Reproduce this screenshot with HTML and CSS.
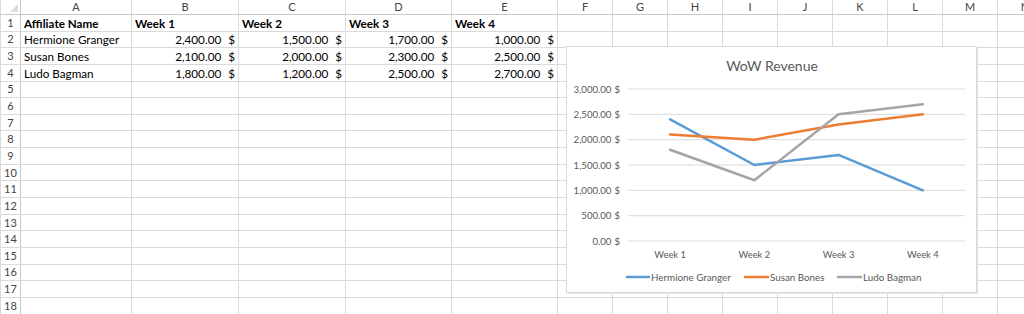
FILE: index.html
```html
<!DOCTYPE html>
<html lang="en">
<head>
    <meta charset="UTF-8">
    <title>WoW Revenue</title>
    <link rel="stylesheet" href="styles.css">
</head>
<body>
    <div class="workbook">
        <table class="sheet">
            <colgroup>
                <col class="col-row">
                <col class="col-a">
                <col class="col-b">
                <col class="col-c">
                <col class="col-d">
                <col class="col-e">
                <col class="col-s"><col class="col-s"><col class="col-s"><col class="col-s"><col class="col-s">
                <col class="col-s"><col class="col-s"><col class="col-s"><col class="col-s">
            </colgroup>
            <tr class="letters">
                <th class="corner"><span class="tri"></span></th>
                <th>A</th><th>B</th><th>C</th><th>D</th><th>E</th><th>F</th><th>G</th>
                <th>H</th><th>I</th><th>J</th><th>K</th><th>L</th><th>M</th><th>N</th>
            </tr>
            <tr>
                <th>1</th>
                <td class="bold">Affiliate Name</td>
                <td class="bold">Week 1</td>
                <td class="bold">Week 2</td>
                <td class="bold">Week 3</td>
                <td class="bold">Week 4</td>
                <td></td><td></td><td></td><td></td><td></td><td></td><td></td><td></td><td></td>
            </tr>
            <tr>
                <th>2</th>
                <td>Hermione Granger</td>
                <td class="num">2,400.00<span class="cur">$</span></td>
                <td class="num">1,500.00<span class="cur">$</span></td>
                <td class="num">1,700.00<span class="cur">$</span></td>
                <td class="num">1,000.00<span class="cur">$</span></td>
                <td></td><td></td><td></td><td></td><td></td><td></td><td></td><td></td><td></td>
            </tr>
            <tr>
                <th>3</th>
                <td>Susan Bones</td>
                <td class="num">2,100.00<span class="cur">$</span></td>
                <td class="num">2,000.00<span class="cur">$</span></td>
                <td class="num">2,300.00<span class="cur">$</span></td>
                <td class="num">2,500.00<span class="cur">$</span></td>
                <td></td><td></td><td></td><td></td><td></td><td></td><td></td><td></td><td></td>
            </tr>
            <tr>
                <th>4</th>
                <td>Ludo Bagman</td>
                <td class="num">1,800.00<span class="cur">$</span></td>
                <td class="num">1,200.00<span class="cur">$</span></td>
                <td class="num">2,500.00<span class="cur">$</span></td>
                <td class="num">2,700.00<span class="cur">$</span></td>
                <td></td><td></td><td></td><td></td><td></td><td></td><td></td><td></td><td></td>
            </tr>
            <tr><th>5</th><td></td><td></td><td></td><td></td><td></td><td></td><td></td><td></td><td></td><td></td><td></td><td></td><td></td><td></td></tr>
            <tr><th>6</th><td></td><td></td><td></td><td></td><td></td><td></td><td></td><td></td><td></td><td></td><td></td><td></td><td></td><td></td></tr>
            <tr><th>7</th><td></td><td></td><td></td><td></td><td></td><td></td><td></td><td></td><td></td><td></td><td></td><td></td><td></td><td></td></tr>
            <tr><th>8</th><td></td><td></td><td></td><td></td><td></td><td></td><td></td><td></td><td></td><td></td><td></td><td></td><td></td><td></td></tr>
            <tr><th>9</th><td></td><td></td><td></td><td></td><td></td><td></td><td></td><td></td><td></td><td></td><td></td><td></td><td></td><td></td></tr>
            <tr><th>10</th><td></td><td></td><td></td><td></td><td></td><td></td><td></td><td></td><td></td><td></td><td></td><td></td><td></td><td></td></tr>
            <tr><th>11</th><td></td><td></td><td></td><td></td><td></td><td></td><td></td><td></td><td></td><td></td><td></td><td></td><td></td><td></td></tr>
            <tr><th>12</th><td></td><td></td><td></td><td></td><td></td><td></td><td></td><td></td><td></td><td></td><td></td><td></td><td></td><td></td></tr>
            <tr><th>13</th><td></td><td></td><td></td><td></td><td></td><td></td><td></td><td></td><td></td><td></td><td></td><td></td><td></td><td></td></tr>
            <tr><th>14</th><td></td><td></td><td></td><td></td><td></td><td></td><td></td><td></td><td></td><td></td><td></td><td></td><td></td><td></td></tr>
            <tr><th>15</th><td></td><td></td><td></td><td></td><td></td><td></td><td></td><td></td><td></td><td></td><td></td><td></td><td></td><td></td></tr>
            <tr><th>16</th><td></td><td></td><td></td><td></td><td></td><td></td><td></td><td></td><td></td><td></td><td></td><td></td><td></td><td></td></tr>
            <tr><th>17</th><td></td><td></td><td></td><td></td><td></td><td></td><td></td><td></td><td></td><td></td><td></td><td></td><td></td><td></td></tr>
            <tr><th>18</th><td></td><td></td><td></td><td></td><td></td><td></td><td></td><td></td><td></td><td></td><td></td><td></td><td></td><td></td></tr>
        </table>

        <!-- chart floats over the cells -->
        <div class="chart">
            <svg width="411" height="247" viewBox="0 0 411 247">
                <text class="title" x="206" y="25">WoW Revenue</text>

                <g class="grid">
                    <line x1="62" y1="43" x2="399" y2="43"/>
                    <line x1="62" y1="68.3" x2="399" y2="68.3"/>
                    <line x1="62" y1="93.7" x2="399" y2="93.7"/>
                    <line x1="62" y1="119" x2="399" y2="119"/>
                    <line x1="62" y1="144.3" x2="399" y2="144.3"/>
                    <line x1="62" y1="169.7" x2="399" y2="169.7"/>
                    <line x1="62" y1="195" x2="399" y2="195"/>
                </g>

                <g class="axis-y">
                    <text x="54" y="46.5">3,000.00<tspan dx="3">$</tspan></text>
                    <text x="54" y="71.8">2,500.00<tspan dx="3">$</tspan></text>
                    <text x="54" y="97.2">2,000.00<tspan dx="3">$</tspan></text>
                    <text x="54" y="122.5">1,500.00<tspan dx="3">$</tspan></text>
                    <text x="54" y="147.8">1,000.00<tspan dx="3">$</tspan></text>
                    <text x="54" y="173.2">500.00<tspan dx="3">$</tspan></text>
                    <text x="54" y="198.5">0.00<tspan dx="3">$</tspan></text>
                </g>

                <g class="axis-x">
                    <text x="104.1" y="211.5">Week 1</text>
                    <text x="188.4" y="211.5">Week 2</text>
                    <text x="272.6" y="211.5">Week 3</text>
                    <text x="356.9" y="211.5">Week 4</text>
                </g>

                <polyline class="s-blue" points="104.1,73.4 188.4,119 272.6,108.9 356.9,144.3"/>
                <polyline class="s-orange" points="104.1,88.6 188.4,93.7 272.6,78.5 356.9,68.3"/>
                <polyline class="s-gray" points="104.1,103.8 188.4,134.2 272.6,68.3 356.9,58.2"/>

                <g class="legend">
                    <line class="s-blue" x1="61" y1="231" x2="83" y2="231"/>
                    <text x="85" y="234.5">Hermione Granger</text>
                    <line class="s-orange" x1="179" y1="231" x2="202" y2="231"/>
                    <text x="204" y="234.5">Susan Bones</text>
                    <line class="s-gray" x1="272" y1="231" x2="295" y2="231"/>
                    <text x="297" y="234.5">Ludo Bagman</text>
                </g>
            </svg>
        </div>
    </div>
</body>
</html>
```

FILE: styles.css
```css
body {
    margin: 0;
    background: #fff;
    overflow: hidden;
    font-family: Lato, "Liberation Sans", sans-serif;
}

.workbook {
    position: relative;
    width: 1024px;
    height: 314px;
    overflow: hidden;
}

.sheet {
    border-collapse: collapse;
    table-layout: fixed;
    width: 1052px;
    font-size: 11.7px;
    color: #000;
}

.col-row { width: 20px; }
.col-a { width: 111px; }
.col-b { width: 107px; }
.col-c { width: 107px; }
.col-d { width: 106px; }
.col-e { width: 106px; }
.col-s { width: 55px; }

.sheet tr {
    height: 16.65px;
}

.sheet tr.letters {
    height: 14px;
}

.sheet th,
.sheet td {
    border: 1px solid #dadada;
    padding: 0 3px;
    white-space: nowrap;
    overflow: hidden;
    line-height: 14px;
}

.sheet th {
    font-weight: normal;
    color: #444;
    font-size: 11px;
    text-align: center;
    padding: 0;
}

.sheet tr th:first-child {
    border-right-color: #c8c8c8;
}

.sheet tr.letters th {
    border-top: none;
    border-bottom-color: #c8c8c8;
}

.corner {
    position: relative;
}

.tri {
    position: absolute;
    right: 2px;
    bottom: 2px;
    width: 0;
    height: 0;
    border-left: 8px solid transparent;
    border-bottom: 8px solid #dcdcdc;
}

.bold {
    font-weight: bold;
}

.num {
    text-align: right;
}

.cur {
    padding-left: 7px;
}

.chart {
    position: absolute;
    left: 566px;
    top: 46px;
    width: 411px;
    height: 247px;
    background: #fff;
    border: 1px solid #d9d9d9;
    box-shadow: 1px 1px 0 #e4e4e4;
    box-sizing: border-box;
}

.chart svg {
    display: block;
    margin: -1px;
    font-family: Lato, "Liberation Sans", sans-serif;
}

.title {
    font-size: 14px;
    fill: #595959;
    text-anchor: middle;
}

.grid line {
    stroke: #d9d9d9;
    stroke-width: 1;
}

.axis-y text {
    font-size: 9.6px;
    fill: #595959;
    text-anchor: end;
}

.axis-x text {
    font-size: 9.4px;
    fill: #595959;
    text-anchor: middle;
}

.legend text {
    font-size: 9.8px;
    fill: #595959;
}

polyline,
.legend line {
    fill: none;
    stroke-width: 2.5;
    stroke-linejoin: round;
    stroke-linecap: round;
}

.s-blue { stroke: #5b9bd5; }
.s-orange { stroke: #ed7d31; }
.s-gray { stroke: #a5a5a5; }
```
